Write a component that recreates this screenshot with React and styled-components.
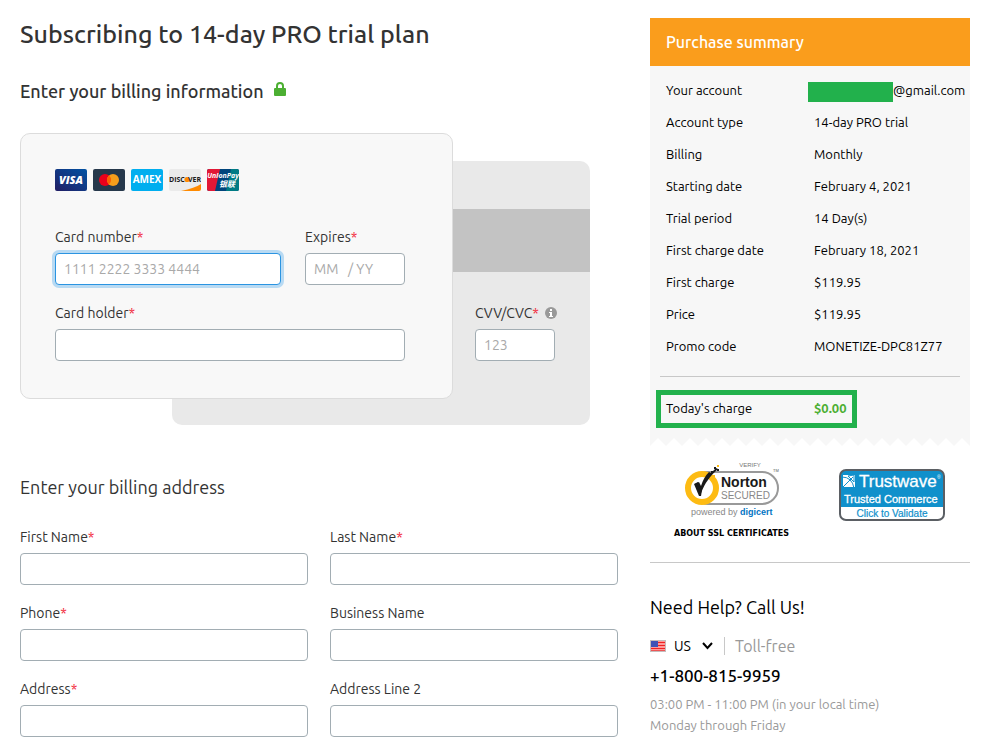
import React from "react";
import styled, { createGlobalStyle } from "styled-components";

const summary = [
  { label: "Your account", value: "@gmail.com", hidden: true },
  { label: "Account type", value: "14-day PRO trial" },
  { label: "Billing", value: "Monthly" },
  { label: "Starting date", value: "February 4, 2021" },
  { label: "Trial period", value: "14 Day(s)" },
  { label: "First charge date", value: "February 18, 2021" },
  { label: "First charge", value: "$119.95" },
  { label: "Price", value: "$119.95" },
  { label: "Promo code", value: "MONETIZE-DPC81Z77" },
];

const addressFields = [
  { id: "first-name", label: "First Name", required: true },
  { id: "last-name", label: "Last Name", required: true },
  { id: "phone", label: "Phone", required: true },
  { id: "business", label: "Business Name" },
  { id: "address", label: "Address", required: true },
  { id: "address2", label: "Address Line 2" },
];

const Field = ({ id, label, required, hint, width, active, placeholder }) => (
  <FieldBox $width={width}>
    <Label htmlFor={id}>
      {label}
      {required && <Star>*</Star>}
      {hint}
    </Label>
    <Input id={id} type="text" placeholder={placeholder} $active={active} />
  </FieldBox>
);

const LockIcon = () => (
  <svg width="12" height="14" viewBox="0 0 12 14" aria-hidden="true">
    <path d="M3 7V4a3 3 0 0 1 6 0v3" fill="none" stroke="#4caf32" strokeWidth="2" />
    <rect y="6" width="12" height="8" rx="1" fill="#4caf32" />
  </svg>
);

const InfoIcon = () => (
  <svg width="12" height="12" viewBox="0 0 12 12" aria-hidden="true">
    <circle cx="6" cy="6" r="6" fill="#999" />
    <path d="M5 2h2v2H5zM4 5h3v4h1v1H4V9h1V6H4z" fill="#fff" />
  </svg>
);

const CardIcons = () => (
  <CardList>
    <svg width="32" height="22" viewBox="0 0 32 22" role="img" aria-label="Visa">
      <defs>
        <linearGradient id="visa" x1="0" y1="1" x2="1" y2="0">
          <stop offset="0" stopColor="#221d63" />
          <stop offset="1" stopColor="#0152a3" />
        </linearGradient>
      </defs>
      <rect width="32" height="22" rx="2" fill="url(#visa)" />
      <LogoText x="16" y="15" fontSize="11" fontStyle="italic" fontWeight="800" textAnchor="middle" fill="#fff">VISA</LogoText>
    </svg>
    <svg width="32" height="22" viewBox="0 0 32 22" role="img" aria-label="Mastercard">
      <rect width="32" height="22" rx="2" fill="#26384b" />
      <circle cx="12" cy="11" r="6" fill="#eb001b" />
      <circle cx="20" cy="11" r="6" fill="#f79e1b" />
      <path d="M16 6.5a6 6 0 0 1 0 9a6 6 0 0 1 0-9" fill="#ff5f00" />
    </svg>
    <svg width="32" height="22" viewBox="0 0 32 22" role="img" aria-label="American Express">
      <rect width="32" height="22" rx="2" fill="#00aeef" />
      <LogoText x="16" y="14" fontSize="10" fontWeight="700" textAnchor="middle" fill="#fff">AMEX</LogoText>
    </svg>
    <svg width="32" height="22" viewBox="0 0 32 22" role="img" aria-label="Discover">
      <rect width="32" height="22" rx="2" fill="#ebebeb" />
      <path d="M12 22Q26 19 32 15V20a2 2 0 0 1-2 2z" fill="#ff8a00" />
      <LogoText x="0" y="13" fontSize="7" fontWeight="700" fill="#1a1a1a">DISC</LogoText>
      <circle cx="18" cy="10.500" r="2.600" fill="#ff8a00" />
      <LogoText x="32" y="13" fontSize="7" fontWeight="700" textAnchor="end" fill="#1a1a1a">VER</LogoText>
    </svg>
    <svg width="32" height="22" viewBox="0 0 32 22" role="img" aria-label="UnionPay">
      <rect width="32" height="22" rx="2" fill="#00447c" />
      <path d="M2 0H13L8 22H2a2 2 0 0 1-2-2V2a2 2 0 0 1 2-2z" fill="#e21836" />
      <path d="M24 0h6a2 2 0 0 1 2 2v18a2 2 0 0 1-2 2H19z" fill="#007b84" />
      <LogoText x="16" y="9" fontSize="7" fontStyle="italic" fontWeight="700" textAnchor="middle" fill="#fff">UnionPay</LogoText>
      <LogoText $cjk x="20" y="18" fontSize="8" fontStyle="italic" fontWeight="700" textAnchor="middle" fill="#fff">银联</LogoText>
    </svg>
  </CardList>
);

const NortonSeal = () => (
  <svg width="96" height="56" viewBox="0 0 96 56" role="img" aria-label="Norton Secured, powered by digicert">
    <rect x="8" y="10" width="86" height="32" rx="16" fill="#fff" stroke="#999" strokeWidth="2" />
    <circle cx="18" cy="26" r="14" fill="#fff" stroke="#fdbb13" strokeWidth="6" />
    <path d="M11 22l6 9C21 21 26 14 34 7l-2-1-5 5-2-1C21 14 19 18 17 24l-2-4z" fill="#1a1a1a" />
    <path d="M10 22l4-2 4 8-1 6h-2z" fill="#1a1a1a" />
    <path d="M27 9h2v2h-2zM30 5h2v2h-2zM33 7h2v2h-2z" fill="#1a1a1a" />
    <path d="M33 3h2v2h-2zM29 13h2v2h-2z" fill="#fdbb13" />
    <SealText x="66" y="5" fontSize="6" textAnchor="middle" fill="#777">VERIFY</SealText>
    <SealText x="37" y="25" fontSize="14" fontWeight="700" fill="#1a1a1a">Norton</SealText>
    <SealText x="37" y="37" fontSize="10" fill="#888">SECURED</SealText>
    <SealText x="89" y="10" fontSize="4" fill="#555">TM</SealText>
    <SealText x="7" y="53" fontSize="9" fill="#888">powered by</SealText>
    <SealText x="56" y="53" fontSize="9" fontWeight="700" fill="#0174c3">digicert</SealText>
  </svg>
);

const TrustwaveSeal = () => (
  <svg width="106" height="52" viewBox="0 0 106 52" role="img" aria-label="Trustwave Trusted Commerce">
    <rect x="1" y="1" width="104" height="50" rx="6" fill="#fff" />
    <path d="M1 38V7a6 6 0 0 1 6-6h92a6 6 0 0 1 6 6v31z" fill="#1090cb" />
    <rect x="1" y="1" width="104" height="50" rx="6" fill="none" stroke="#5b5f64" strokeWidth="2" />
    <path d="M4 6h12v12H4z" fill="#fff" />
    <path d="M3 19L14 8M3 8Q13 8 15 19M9 7l6-1v7z" fill="none" stroke="#1090cb" strokeWidth="1" />
    <SealText x="20" y="18" fontSize="17" fill="#fff" stroke="#fff" strokeWidth="0.300">Trustwave</SealText>
    <SealText x="98" y="10" fontSize="5" fill="#fff">®</SealText>
    <SealText x="5" y="34" fontSize="11" fill="#fff" stroke="#fff" strokeWidth="0.300">Trusted Commerce</SealText>
    <SealText x="53" y="48" fontSize="10" textAnchor="middle" fill="#1090cb" stroke="#1090cb" strokeWidth="0.200">Click to Validate</SealText>
  </svg>
);

const Flag = () => (
  <svg width="16" height="12" viewBox="0 0 16 12" aria-hidden="true">
    <rect width="16" height="12" fill="#f99" />
    <path d="M0 2h16v1H0zM0 5h16v1H0zM0 8h16v1H0z" fill="#e22" />
    <path d="M0 10h16v1H0z" fill="#e55" />
    <rect x="1" y="1" width="7" height="6" fill="#3f51b5" />
    <rect x="0.500" y="0.500" width="15" height="11" fill="none" stroke="#c4bcbc" />
  </svg>
);

const App = () => {
  return (
    <>
      <GlobalStyle />
      <Page>
        <Main>
          <Title>Subscribing to 14-day PRO trial plan</Title>
          <Subtitle>
            Enter your billing information
            <LockIcon />
          </Subtitle>
          <Deck>
            <BackCard>
              <Stripe />
              <Field
                id="cvv"
                label="CVV/CVC"
                required
                hint={<InfoIcon />}
                width="80px"
                placeholder="123"
              />
            </BackCard>
            <FrontCard>
              <CardIcons />
              <FieldRow>
                <Field
                  id="card-number"
                  label="Card number"
                  required
                  active
                  width="226px"
                  placeholder="1111 2222 3333 4444"
                />
                <Field
                  id="expires"
                  label="Expires"
                  required
                  width="100px"
                  placeholder={"MM\u00a0\u00a0\u00a0/ YY"}
                />
              </FieldRow>
              <Field id="card-holder" label="Card holder" required />
            </FrontCard>
          </Deck>
          <SectionTitle>Enter your billing address</SectionTitle>
          <AddressGrid>
            {addressFields.map((field) => (
              <Field key={field.id} {...field} />
            ))}
          </AddressGrid>
        </Main>

        <Sidebar>
          <SummaryHeader>Purchase summary</SummaryHeader>
          <SummaryBody>
            <SummaryTable>
              <tbody>
                {summary.map((row) => (
                  <tr key={row.label}>
                    <th scope="row">{row.label}</th>
                    <td>
                      {row.hidden && <Redacted />}
                      {row.value}
                    </td>
                  </tr>
                ))}
              </tbody>
            </SummaryTable>
            <Divider $inset />
            <TodayCharge>
              <span>Today's charge</span>
              <Amount>$0.00</Amount>
            </TodayCharge>
          </SummaryBody>
          <TornEdge height="8" aria-hidden="true">
            <defs>
              <pattern id="teeth" width="16" height="8" patternUnits="userSpaceOnUse">
                <path d="M0 0H16V8L8 0L0 8z" fill="#f7f7f7" />
              </pattern>
            </defs>
            <rect width="100%" height="8" fill="url(#teeth)" />
          </TornEdge>

          <Seals>
            <Norton>
              <NortonSeal />
              <SslLink href="#ssl">ABOUT SSL CERTIFICATES</SslLink>
            </Norton>
            <Trustwave href="#trustwave">
              <TrustwaveSeal />
            </Trustwave>
          </Seals>
          <Divider />

          <HelpTitle>Need Help? Call Us!</HelpTitle>
          <Country>
            <Flag />
            <CountrySelect aria-label="Country" defaultValue="US">
              <option value="US">US</option>
              <option value="UK">UK</option>
            </CountrySelect>
            <svg width="11" height="8" viewBox="0 0 11 8" aria-hidden="true">
              <path d="M1 1l4.500 5L10 1" fill="none" stroke="#000" strokeWidth="2" />
            </svg>
            <TollFree>Toll-free</TollFree>
          </Country>
          <PhoneNumber href="tel:+18008159959">+1-800-815-9959</PhoneNumber>
          <Hours>03:00 PM - 11:00 PM (in your local time)</Hours>
          <Hours>Monday through Friday</Hours>
        </Sidebar>
      </Page>
    </>
  );
};

export default App;

const GlobalStyle = createGlobalStyle`
  * {
    box-sizing: border-box;
  }
  body {
    margin: 0;
    background: #fff;
    color: #333;
    font-family: Ubuntu, "Noto Sans", sans-serif;
    font-size: 14px;
  }
  input, select {
    font-family: inherit;
  }
`;
const LogoText = styled.text`
  font-family: ${(props) =>
    props.$cjk ? '"Noto Sans CJK SC", sans-serif' : '"Open Sans", sans-serif'};
`;
const SealText = styled.text`
  font-family: "Liberation Sans", sans-serif;
`;
const Page = styled.div`
  display: grid;
  grid-template-columns: minmax(0, 1fr) 320px;
  gap: 32px;
  padding: 0 11px 0 20px;
`;
const Main = styled.main`
  padding-top: 16px;
`;
const Title = styled.h1`
  margin: 0;
  font-size: 25px;
  line-height: 36px;
  font-weight: 500;
`;
const Subtitle = styled.h2`
  display: flex;
  align-items: center;
  gap: 10px;
  margin: 27px 0 30px;
  font-size: 18px;
  line-height: 24px;
  font-weight: 500;

  svg {
    margin-bottom: 4px;
  }
`;
const SectionTitle = styled.h2`
  margin: 50px 0 28px;
  font-size: 18px;
  line-height: 24px;
  font-weight: 400;
`;
/* both cards share the grid, the front one lies over the back one */
const Deck = styled.div`
  display: grid;
  grid-template-columns: 152px 281px 137px;
  grid-template-rows: 28px auto 26px;
`;
const FrontCard = styled.section`
  grid-column: 1 / 3;
  grid-row: 1 / 3;
  padding: 35px 47px 37px 34px;
  border: 1px solid #dcdcdc;
  border-radius: 10px;
  background: #f8f8f8;
`;
const BackCard = styled.section`
  grid-column: 2 / 4;
  grid-row: 2 / 4;
  display: flex;
  flex-direction: column;
  align-items: flex-end;
  padding-top: 48px;
  border-radius: 10px;
  background: #e9e9e9;

  > div:last-child {
    margin: 31px 35px 0 0;
  }
`;
const Stripe = styled.div`
  width: 100%;
  height: 63px;
  background: #c3c3c3;
`;
const CardList = styled.div`
  display: flex;
  gap: 6px;
  margin-bottom: 36px;
`;
const FieldRow = styled.div`
  display: flex;
  justify-content: space-between;
  margin-bottom: 18px;
`;
const FieldBox = styled.div`
  width: ${(props) => props.$width || "100%"};
`;
const Label = styled.label`
  display: flex;
  align-items: center;
  margin-bottom: 6px;
  font-size: 14px;
  line-height: 20px;
  white-space: nowrap;

  svg {
    flex: none;
    margin-left: 6px;
  }
`;
const Star = styled.span`
  color: #f22c3d;
`;
const Input = styled.input`
  display: block;
  width: 100%;
  height: 32px;
  padding: 0 8px;
  border: 1px solid ${(props) => (props.$active ? "#2b94e1" : "#a2adb3")};
  border-radius: 4px;
  background: #fff;
  box-shadow: ${(props) => (props.$active ? "0 0 0 3px #b8daf3" : "none")};
  font-size: 14px;

  &::placeholder {
    color: #a9a9a9;
  }
`;
const AddressGrid = styled.div`
  display: grid;
  grid-template-columns: 1fr 1fr;
  gap: 18px 22px;
`;
const Sidebar = styled.aside`
  padding-top: 18px;
  color: #000;
`;
const SummaryHeader = styled.h2`
  margin: 0;
  padding: 0 16px;
  background: #fa9d1c;
  color: #fff;
  font-size: 16px;
  line-height: 48px;
  font-weight: 500;
`;
const SummaryBody = styled.div`
  padding: 8px 0 10px;
  background: #f7f7f7;
  font-size: 13px;
`;
const SummaryTable = styled.table`
  width: 100%;
  border-collapse: collapse;
  line-height: 32px;

  th {
    width: 164px;
    padding: 0 0 0 16px;
    font-weight: 400;
    text-align: left;
  }
  td {
    padding: 0;
    white-space: nowrap;
  }
`;
const Redacted = styled.span`
  display: inline-block;
  width: 85px;
  height: 20px;
  margin-left: -6px;
  background: #22b14c;
  vertical-align: middle;
`;
const Divider = styled.hr`
  height: 1px;
  margin: ${(props) => (props.$inset ? "14px 10px 13px" : "0")};
  border: 0;
  background: #c8c8c8;
`;
const TodayCharge = styled.div`
  display: grid;
  grid-template-columns: 148px auto;
  width: 201px;
  height: 38px;
  margin-left: 6px;
  padding: 0 5px;
  border: 5px solid #22b14c;
  line-height: 26px;
`;
const Amount = styled.strong`
  color: #4caf32;
`;
const TornEdge = styled.svg`
  display: block;
  width: 100%;
`;
const Seals = styled.div`
  display: flex;
  justify-content: space-between;
  align-items: flex-start;
  padding: 16px 25px 22px 24px;
`;
const Norton = styled.div`
  display: flex;
  flex-direction: column;
  align-items: center;
  gap: 10px;
`;
const SslLink = styled.a`
  color: #000;
  font-family: "DejaVu Sans", sans-serif;
  font-size: 8px;
  line-height: 12px;
  font-weight: 700;
  text-decoration: none;
`;
const Trustwave = styled.a`
  display: block;
  margin-top: 7px;
`;
const HelpTitle = styled.h2`
  margin: 32px 0 15px;
  font-size: 18px;
  line-height: 24px;
  font-weight: 400;
`;
const Country = styled.div`
  display: flex;
  align-items: center;
  height: 24px;
`;
const CountrySelect = styled.select`
  width: 28px;
  margin-left: 8px;
  padding: 0;
  border: 0;
  appearance: none;
  background: none;
  color: #000;
  font-size: 14px;
`;
const TollFree = styled.span`
  margin-left: 11px;
  padding-left: 10px;
  border-left: 1px solid #c8c8c8;
  color: #999;
  font-size: 16px;
  line-height: 18px;
`;
const PhoneNumber = styled.a`
  display: block;
  margin: 6px 0;
  color: #000;
  font-size: 17px;
  line-height: 24px;
  font-weight: 500;
  text-decoration: none;
`;
const Hours = styled.p`
  margin: 0;
  color: #999;
  font-size: 13px;
  line-height: 21px;
`;
